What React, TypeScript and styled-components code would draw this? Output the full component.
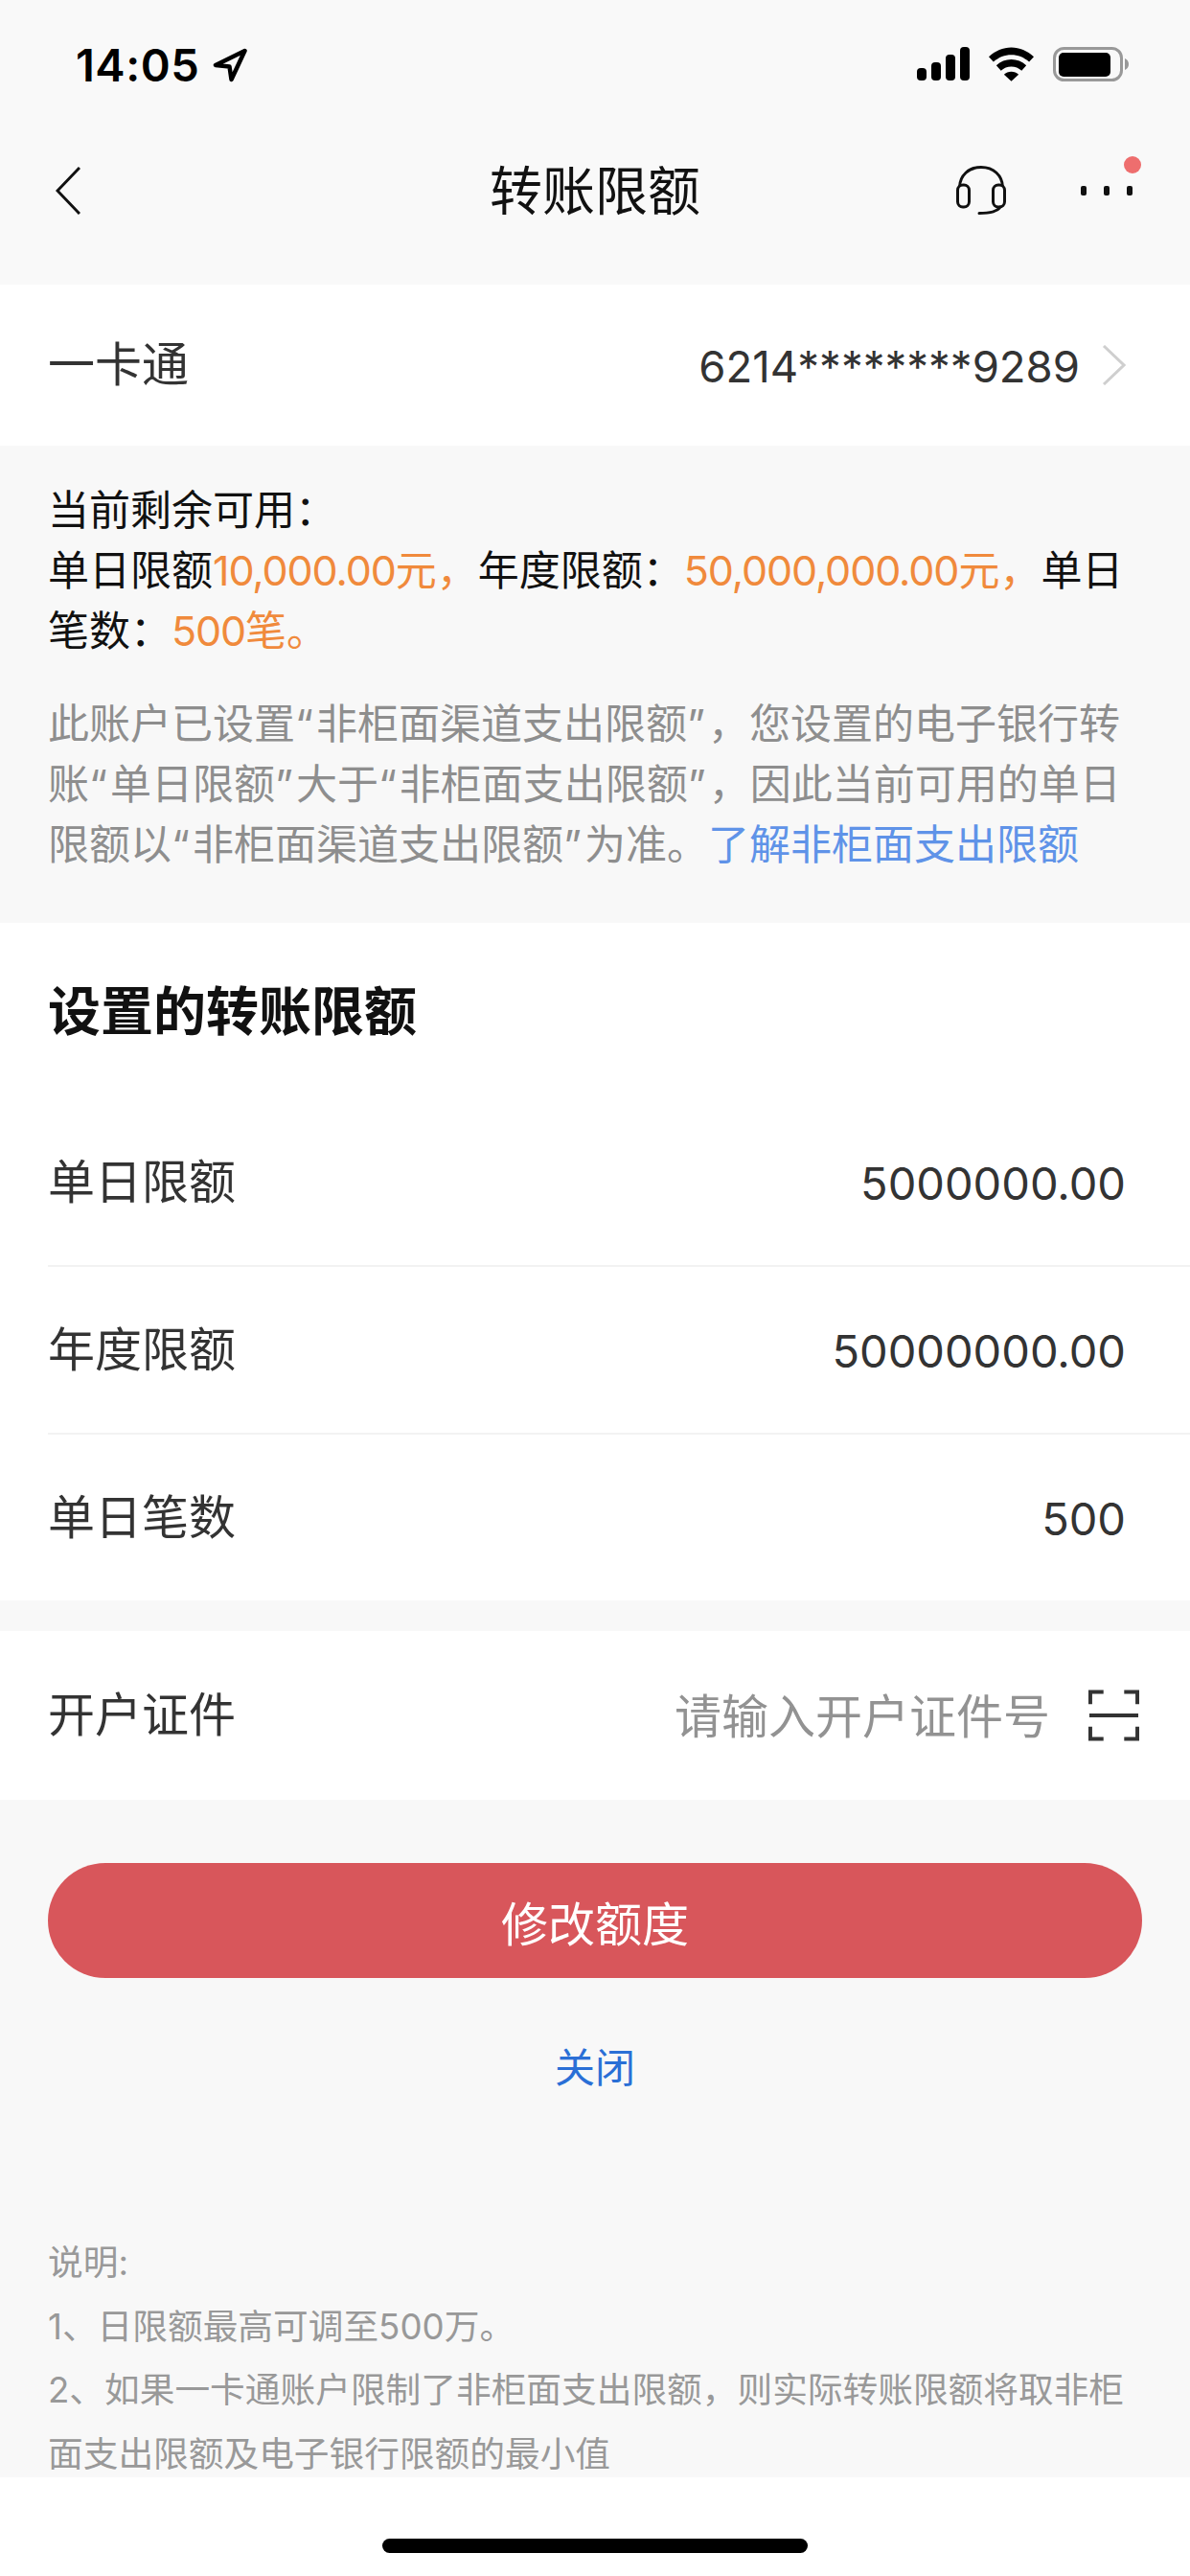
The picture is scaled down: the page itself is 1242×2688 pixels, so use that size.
import React from "react";
import styled, { createGlobalStyle } from "styled-components";

const Global = createGlobalStyle`
  html, body { margin: 0; padding: 0; background: #fff; }
  * { box-sizing: border-box; }
`;

const Page = styled.div`
  width: 1242px;
  height: 2688px;
  overflow: hidden;
  display: flex;
  flex-direction: column;
  background: #f8f8f8;
  font-family: Inter, "Noto Sans CJK SC", sans-serif;
  color: #333;
`;

const StatusBar = styled.div`
  height: 100px;
  flex: none;
  display: flex;
  align-items: flex-start;
  justify-content: space-between;
  padding: 49px 64px 0 79px;
  background: #f9f9f9;
`;
const StatusGroup = styled.div<{ $gap: number }>`
  display: flex;
  align-items: center;
  gap: ${(p) => p.$gap}px;
`;
const Time = styled.span`
  font-size: 47px;
  line-height: 38px;
  font-weight: 600;
  color: #000;
  font-family: Inter, sans-serif;
  letter-spacing: 0.5px;
`;

const Nav = styled.div`
  height: 197px;
  flex: none;
  display: grid;
  grid-template-columns: 1fr auto 1fr;
  align-items: center;
  padding: 0 50px;
  background: #f9f9f9;
`;
const BackButton = styled.div`
  display: flex;
  padding-left: 8px;
`;
const Title = styled.h1`
  margin: 0;
  font-size: 55px;
  line-height: 70px;
  font-weight: 400;
  color: #111;
`;
const NavActions = styled.div`
  display: flex;
  justify-content: flex-end;
  align-items: center;
  gap: 78px;
`;
const MoreButton = styled.div`
  position: relative;
  width: 64px;
  height: 40px;
  display: flex;
  align-items: center;
`;
const RedDot = styled.span`
  position: absolute;
  right: 1px;
  top: -16px;
  width: 18px;
  height: 18px;
  border-radius: 50%;
  background: #ee6e6e;
`;

const Row = styled.div<{ $h: number; $pr: number }>`
  height: ${(p) => p.$h}px;
  flex: none;
  display: flex;
  align-items: center;
  justify-content: space-between;
  padding: 0 ${(p) => p.$pr}px 0 50px;
  background: #fff;
  font-size: 49px;
  color: #333;
`;
const RowLabel = styled.span`
  line-height: 60px;
`;
const RowRight = styled.div<{ $gap: number }>`
  display: flex;
  align-items: center;
  gap: ${(p) => p.$gap}px;
`;
const CardNo = styled.span`
  font-size: 45.5px;
  line-height: 60px;
  padding-top: 3px;
`;

const Info = styled.div`
  flex: none;
  height: 498px;
  padding: 36px 50px 0;
  background: #f8f8f8;
`;
const InfoText = styled.p<{ $muted?: boolean }>`
  margin: 0 0 ${(p) => (p.$muted ? 0 : 34)}px;
  font-size: 43px;
  line-height: 63px;
  color: ${(p) => (p.$muted ? "#8e8e8e" : "#111")};
  white-space: nowrap;
`;
const Orange = styled.span`
  color: #f08a3c;
`;
const Digits = styled.span`
  letter-spacing: -1.1px;
`;
const Quote = styled.span`
  letter-spacing: 3px;
`;
const Link = styled.span`
  color: #5f93e8;
`;

const Limits = styled.section`
  flex: none;
  height: 707px;
  background: #fff;
  display: flex;
  flex-direction: column;
`;
const SectionTitle = styled.h2`
  margin: 0;
  height: 184px;
  padding: 0 0 0 50px;
  display: flex;
  align-items: center;
  font-size: 55px;
  line-height: 70px;
  font-weight: 700;
  color: #111;
`;
const LimitRow = styled.div<{ $last?: boolean }>`
  flex: 1;
  margin-left: 50px;
  padding-right: 67px;
  display: flex;
  align-items: center;
  justify-content: space-between;
  font-size: 49px;
  line-height: 60px;
  color: #333;
  border-bottom: ${(p) => (p.$last ? "none" : "2px solid #f2f2f2")};
`;
const LimitValue = styled.span`
  font-size: 47px;
  padding-top: 3px;
`;

const Gap = styled.div`
  height: 32px;
  flex: none;
`;
const Placeholder = styled.span`
  font-size: 49px;
  line-height: 60px;
  color: #929292;
  padding-top: 3px;
`;

const Actions = styled.div`
  flex: none;
  padding: 66px 50px 0;
  display: flex;
  flex-direction: column;
  align-items: center;
`;
const PrimaryButton = styled.button`
  width: 100%;
  height: 120px;
  border: 0;
  border-radius: 60px;
  background: #d8565b;
  color: #fff;
  font: inherit;
  font-size: 49px;
`;
const CloseLink = styled.div`
  margin-top: 64px;
  font-size: 42px;
  line-height: 60px;
  color: #2a6fd6;
`;

const Notes = styled.div`
  flex: 1;
  min-height: 0;
  overflow: hidden;
  padding: 140px 50px 0;
  font-size: 36.7px;
  line-height: 66.5px;
  color: #999;
`;
const NoteLine = styled.div`
  white-space: nowrap;
`;

const Footer = styled.div`
  flex: none;
  height: 103px;
  background: #fff;
  display: flex;
  justify-content: center;
  padding-top: 64px;
`;
const HomeBar = styled.div`
  width: 444px;
  height: 15px;
  border-radius: 8px;
  background: #000;
`;

const LocationIcon = () => (
  <svg width="36" height="36" viewBox="0 0 36 36" fill="none">
    <path d="M33.500 3 L3 18 L17.500 19.500 L19.500 33 Z" stroke="#000" strokeWidth="4.500" strokeLinejoin="round" />
  </svg>
);
const SignalIcon = () => (
  <svg width="55" height="36" viewBox="0 0 55 36" fill="#000">
    <rect x="0" y="22" width="10" height="13" rx="4" />
    <rect x="15" y="16" width="10" height="19" rx="4" />
    <rect x="30" y="8" width="10" height="27" rx="4" />
    <rect x="45" y="0" width="10" height="35" rx="4" />
  </svg>
);
const WifiIcon = () => (
  <svg width="47" height="36" viewBox="0 0 48 36" fill="#000">
    <path d="M24 0C15 0 7 3.500 0 10l5 5.500C10.500 10.500 17 8 24 8s13.500 2.500 19 7.500L48 10C41 3.500 33 0 24 0z" />
    <path d="M24 13c-6 0-11.500 2.200-16 6.300l5 5.500c3-2.800 7-4.300 11-4.300s8 1.500 11 4.300l5-5.500C35.500 15.200 30 13 24 13z" />
    <path d="M24 26c-3 0-5.700 1.100-7.800 3L24 36l7.800-7c-2.100-1.900-4.800-3-7.800-3z" />
  </svg>
);
const BatteryIcon = () => (
  <svg width="79" height="36" viewBox="0 0 79 36" fill="none">
    <rect x="1.500" y="1.500" width="70" height="33" rx="10" stroke="#999" strokeWidth="3" />
    <rect x="6" y="6" width="54" height="25" rx="5" fill="#000" />
    <path d="M75 12c2.500 1 4 3.300 4 6s-1.500 5-4 6z" fill="#999" />
  </svg>
);
const BackIcon = () => (
  <svg width="26" height="50" viewBox="0 0 26 50" fill="none">
    <path d="M25 1 L2 25 L25 49" stroke="#111" strokeWidth="3" />
  </svg>
);
const HeadsetIcon = () => (
  <svg width="52" height="51" viewBox="0 0 52 51" fill="none" stroke="#111" strokeWidth="3">
    <path d="M3.500 22C4 10 13 1.500 26 1.500S48 10 48.500 22" />
    <rect x="1.500" y="20" width="12" height="23" rx="5.500" />
    <rect x="38.500" y="20" width="12" height="23" rx="5.500" />
    <path d="M46 43c-3 4.500-12 6.500-22 6.500" strokeLinecap="round" />
  </svg>
);
const DotsIcon = () => (
  <svg width="54" height="10" viewBox="0 0 54 10" fill="#111">
    <rect x="0" y="0" width="6" height="10" rx="2" />
    <rect x="24" y="0" width="6" height="10" rx="2" />
    <rect x="48" y="0" width="6" height="10" rx="2" />
  </svg>
);
const ChevronIcon = () => (
  <svg width="25" height="42" viewBox="0 0 25 42" fill="none">
    <path d="M2 1 L23 21 L2 41" stroke="#cfcfcf" strokeWidth="3" />
  </svg>
);
const ScanIcon = () => (
  <svg width="53" height="54" viewBox="0 0 54 54" fill="none" stroke="#333" strokeWidth="4">
    <path d="M2 15V2h14M38 2h14v13M2 39v13h14M38 52h14V39" />
    <path d="M1 27h52" />
  </svg>
);

export default function App() {
  return (
    <Page>
      <Global />
      <StatusBar>
        <StatusGroup $gap={14}>
          <Time>14:05</Time>
          <LocationIcon />
        </StatusGroup>
        <StatusGroup $gap={20}>
          <SignalIcon />
          <WifiIcon />
          <BatteryIcon />
        </StatusGroup>
      </StatusBar>
      <Nav>
        <BackButton>
          <BackIcon />
        </BackButton>
        <Title>转账限额</Title>
        <NavActions>
          <HeadsetIcon />
          <MoreButton>
            <DotsIcon />
            <RedDot />
          </MoreButton>
        </NavActions>
      </Nav>
      <Row $h={168} $pr={67}>
        <RowLabel>一卡通</RowLabel>
        <RowRight $gap={23}>
          <CardNo>6214********9289</CardNo>
          <ChevronIcon />
        </RowRight>
      </Row>
      <Info>
        <InfoText>
          当前剩余可用：
          <br />
          单日限额<Orange><Digits>10,000.00</Digits>元，</Orange>年度限额：<Orange><Digits>50,000,000.00</Digits>元，</Orange>单日
          <br />
          笔数：<Orange><Digits>500</Digits>笔。</Orange>
        </InfoText>
        <InfoText $muted>
          此账户已设置<Quote>“</Quote>非柜面渠道支出限额<Quote>”</Quote>，您设置的电子银行转
          <br />
          账<Quote>“</Quote>单日限额<Quote>”</Quote>大于<Quote>“</Quote>非柜面支出限额<Quote>”</Quote>，因此当前可用的单日
          <br />
          限额以<Quote>“</Quote>非柜面渠道支出限额<Quote>”</Quote>为准。<Link>了解非柜面支出限额</Link>
        </InfoText>
      </Info>
      <Limits>
        <SectionTitle>设置的转账限额</SectionTitle>
        <LimitRow>
          <span>单日限额</span>
          <LimitValue>5000000.00</LimitValue>
        </LimitRow>
        <LimitRow>
          <span>年度限额</span>
          <LimitValue>50000000.00</LimitValue>
        </LimitRow>
        <LimitRow $last>
          <span>单日笔数</span>
          <LimitValue>500</LimitValue>
        </LimitRow>
      </Limits>
      <Gap />
      <Row $h={176} $pr={53}>
        <RowLabel>开户证件</RowLabel>
        <RowRight $gap={40}>
          <Placeholder>请输入开户证件号</Placeholder>
          <ScanIcon />
        </RowRight>
      </Row>
      <Actions>
        <PrimaryButton>修改额度</PrimaryButton>
        <CloseLink>关闭</CloseLink>
      </Actions>
      <Notes>
        <NoteLine>说明:</NoteLine>
        <NoteLine>1、日限额最高可调至500万。</NoteLine>
        <NoteLine>2、如果一卡通账户限制了非柜面支出限额，则实际转账限额将取非柜</NoteLine>
        <NoteLine>面支出限额及电子银行限额的最小值</NoteLine>
      </Notes>
      <Footer>
        <HomeBar />
      </Footer>
    </Page>
  );
}
